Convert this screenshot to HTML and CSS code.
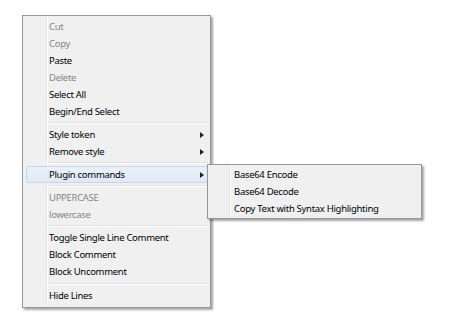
FILE: index.html
```html
<!DOCTYPE html>
<html>
<head>
<meta charset="utf-8">
<link rel="stylesheet" href="styles.css">
</head>
<body>
<div class="menu main">
  <div class="item disabled">Cut</div>
  <div class="item disabled">Copy</div>
  <div class="item">Paste</div>
  <div class="item disabled">Delete</div>
  <div class="item">Select All</div>
  <div class="item">Begin/End Select</div>
  <div class="sep"></div>
  <div class="item">Style token<span class="arrow"></span></div>
  <div class="item">Remove style<span class="arrow"></span></div>
  <div class="sep"></div>
  <div class="item active">Plugin commands<span class="arrow"></span>
    <div class="menu sub">
      <div class="item">Base64 Encode</div>
      <div class="item">Base64 Decode</div>
      <div class="item">Copy Text with Syntax Highlighting</div>
    </div>
  </div>
  <div class="sep"></div>
  <div class="item disabled">UPPERCASE</div>
  <div class="item disabled">lowercase</div>
  <div class="sep"></div>
  <div class="item">Toggle Single Line Comment</div>
  <div class="item">Block Comment</div>
  <div class="item">Block Uncomment</div>
  <div class="sep sep-wide"></div>
  <div class="item">Hide Lines</div>
</div>
</body>
</html>
```

FILE: styles.css
```css
html, body {
  margin: 0;
  padding: 0;
  background: #ffffff;
}
body {
  width: 452px;
  height: 320px;
  overflow: hidden;
  font-family: "Noto Sans", "Open Sans", sans-serif;
  font-size: 9.5px;
  letter-spacing: -0.3px;
  color: #000;
}
.menu {
  box-sizing: border-box;
  border: 1px solid #979797;
  background-color: #f0f0f0;
  background-image: linear-gradient(to right, transparent 23px, #e2e3e3 23px, #e2e3e3 24px, #ffffff 24px, #ffffff 25px, transparent 25px);
  box-shadow: 2px 2px 2px rgba(0, 0, 0, 0.35);
  padding: 2px;
}
.main {
  width: 189px;
  margin: 15px 0 0 22px;
  padding-bottom: 3px;
}
.item {
  position: relative;
  height: 17px;
  line-height: 17px;
  padding-left: 24px;
  display: flex;
  align-items: center;
  white-space: nowrap;
}
.item.disabled {
  color: #858585;
}
.item.active {
  margin-left: 1px;
  padding-left: 23px;
  border-radius: 3px;
  background: linear-gradient(#ebf1f9, #dfe9f5);
  box-shadow: inset 0 0 0 1px #c5d7ee;
}
.arrow {
  margin-left: auto;
  margin-right: 4px;
  width: 0;
  height: 0;
  border-top: 3.5px solid transparent;
  border-bottom: 3.5px solid transparent;
  border-left: 4px solid #222;
}
.sep {
  height: 1px;
  margin: 2px 0 2px 24px;
  background: #e0e0e0;
  border-bottom: 1px solid #ffffff;
}
.sep-wide {
  margin-top: 3px;
}
.sub {
  position: absolute;
  left: 181px;
  top: -2px;
  width: 215px;
  padding: 1px 2px;
  background-image: linear-gradient(to right, transparent 21px, #e2e3e3 21px, #e2e3e3 22px, #ffffff 22px, #ffffff 23px, transparent 23px);
  z-index: 2;
}
.sub .item {
  padding-left: 24px;
}
```
